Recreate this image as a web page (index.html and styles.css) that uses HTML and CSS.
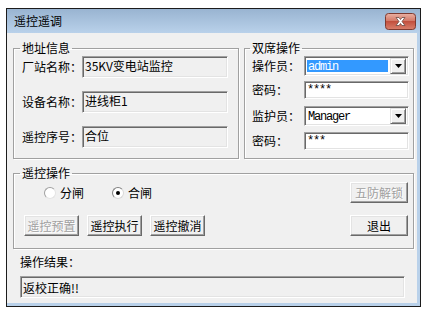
FILE: index.html
```html
<!DOCTYPE html>
<html lang="zh-CN">
<head>
  <meta charset="UTF-8">
  <title>遥控遥调</title>
  <link rel="stylesheet" href="styles.css">
</head>
<body>

<div class="window">
  <div class="titlebar">
    <span class="title">遥控遥调</span>
    <span class="close-btn">
      <svg width="31" height="17" viewBox="0 0 31 17">
        <defs>
          <linearGradient id="closeGrad" x1="0" y1="0" x2="0" y2="1">
            <stop offset="0" stop-color="#eab1a4"/>
            <stop offset="0.45" stop-color="#d47a68"/>
            <stop offset="0.5" stop-color="#c2503e"/>
            <stop offset="1" stop-color="#d9806c"/>
          </linearGradient>
        </defs>
        <rect x="0.5" y="0.5" width="30" height="16" rx="3" fill="url(#closeGrad)" stroke="#7d3a30"/>
        <path d="M11 4.5h3l1.5 2 1.5-2h3l-3 4 3 4h-3l-1.5-2-1.5 2h-3l3-4z" fill="#fff" stroke="#6b4a44" stroke-width="0.8" stroke-linejoin="round"/>
      </svg>
    </span>
  </div>

  <div class="client">
    <div class="top-row">
      <fieldset class="group group-addr">
        <legend>地址信息</legend>
        <div class="field"><label>厂站名称：</label><div class="edit">35KV变电站监控</div></div>
        <div class="field"><label>设备名称：</label><div class="edit">进线柜1</div></div>
        <div class="field"><label>遥控序号：</label><div class="edit">合位</div></div>
      </fieldset>

      <fieldset class="group group-dual">
        <legend>双席操作</legend>
        <div class="dual-row combo-row">
          <label>操作员：</label>
          <div class="combo">
            <span class="combo-value selected">admin</span>
            <span class="drop-btn"><svg width="7" height="4" viewBox="0 0 7 4"><path d="M0 0h7L3.5 4z" fill="#000"/></svg></span>
          </div>
        </div>
        <div class="dual-row pass-row first-pass">
          <label>密码：</label>
          <div class="pass">****</div>
        </div>
        <div class="dual-row combo-row second-combo">
          <label>监护员：</label>
          <div class="combo">
            <span class="combo-value">Manager</span>
            <span class="drop-btn"><svg width="7" height="4" viewBox="0 0 7 4"><path d="M0 0h7L3.5 4z" fill="#000"/></svg></span>
          </div>
        </div>
        <div class="dual-row pass-row second-pass">
          <label>密码：</label>
          <div class="pass">***</div>
        </div>
      </fieldset>
    </div>

    <fieldset class="group group-op">
      <legend>遥控操作</legend>
      <div class="op-row radio-row">
        <span class="radio-item"><span class="radio"></span>分闸</span>
        <span class="radio-item"><span class="radio checked"></span>合闸</span>
        <button class="btn" disabled>五防解锁</button>
      </div>
      <div class="op-row button-row">
        <button class="btn" disabled>遥控预置</button>
        <button class="btn">遥控执行</button>
        <button class="btn">遥控撤消</button>
        <button class="btn btn-exit">退出</button>
      </div>
    </fieldset>

    <div class="result-label">操作结果：</div>
    <div class="edit result">返校正确!!</div>
  </div>
</div>

</body>
</html>
```

FILE: styles.css
```css
* {
  box-sizing: border-box;
}

body {
  margin: 0;
  background: #ffffff;
  font-family: "Noto Sans CJK SC", "Liberation Sans", sans-serif;
  font-size: 12px;
  color: #000;
}

.window {
  margin: 8px 0 0 6px;
  width: 415px;
  height: 299px;
  border: 1px solid #1c1c1c;
  background: #b9d1ea;
  display: flex;
  flex-direction: column;
}

.titlebar {
  height: 24px;
  flex: none;
  display: flex;
  justify-content: space-between;
  padding: 0 4px 0 7px;
  background: linear-gradient(#99b4d1, #b9d1ea);
}

.title {
  line-height: 24px;
}

.close-btn {
  margin-top: 4px;
  width: 31px;
  height: 17px;
  display: block;
}

.close-btn svg {
  display: block;
}

.client {
  flex: 1;
  margin: 0 3px 3px 0;
  background: #f0f0f0;
  padding: 8px 0 0 6px;
}

/* group boxes */
.group {
  margin: 0;
  min-width: 0;
  border: 1px solid #a0a0a0;
  box-shadow: 1px 1px 0 #ffffff, inset 1px 1px 0 #ffffff;
}

.group legend {
  padding: 0 2px;
  margin-left: -2px;
  line-height: 14px;
}

.top-row {
  display: flex;
  gap: 5px;
}

.group-addr {
  width: 226px;
  padding: 1px 10px 10px 8px;
  display: grid;
  row-gap: 13px;
}

.group-dual {
  width: 170px;
  padding: 1px 4px 8px 7px;
}

.field {
  display: grid;
  grid-template-columns: 60px 146px;
  align-items: center;
}

.field label,
.dual-row label {
  line-height: 14px;
  white-space: nowrap;
}

/* sunken edit boxes */
.edit,
.pass,
.combo {
  border: 1px solid;
  border-color: #a0a0a0 #ffffff #ffffff #a0a0a0;
  box-shadow: inset 1px 1px 0 #696969, inset -1px -1px 0 #e3e3e3;
}

.edit {
  height: 22px;
  padding: 2px 2px 0;
  line-height: 14px;
  background: #f0f0f0;
  white-space: nowrap;
}

.dual-row {
  display: grid;
  grid-template-columns: 52px 105px;
  align-items: center;
}

.first-pass {
  margin-top: 5px;
}

.second-combo {
  margin-top: 7px;
}

.second-pass {
  margin-top: 6px;
}

.combo {
  height: 20px;
  background: #ffffff;
  display: flex;
  padding: 2px;
}

.combo-value {
  flex: 1;
  margin: 1px 2px 1px 0;
  padding-left: 1px;
  font-family: "Liberation Mono", monospace;
  font-size: 12px;
  letter-spacing: -1.2px;
  line-height: 14px;
}

.combo-value.selected {
  background: #3399ff;
  color: #ffffff;
}

.drop-btn {
  width: 16px;
  height: 16px;
  margin: -1px 0 0 0;
  background: #f0f0f0;
  border: 1px solid;
  border-color: #e3e3e3 #696969 #696969 #e3e3e3;
  box-shadow: inset 1px 1px 0 #ffffff, inset -1px -1px 0 #a0a0a0;
  display: flex;
  align-items: center;
  justify-content: center;
}

.drop-btn svg {
  display: block;
}

.pass {
  height: 18px;
  background: #ffffff;
  padding: 1px 2px 0;
  font-family: "Liberation Mono", monospace;
  font-size: 12px;
  letter-spacing: -1.2px;
  line-height: 14px;
}

/* remote control operation */
.group-op {
  margin-top: 7px;
  width: 401px;
  padding: 2px 5px 12px 8px;
}

.op-row {
  display: flex;
  align-items: center;
  height: 21px;
}

.radio-row {
  padding-left: 22px;
}

.button-row {
  margin-top: 12px;
  padding-left: 2px;
  gap: 8px;
}

.radio-item {
  display: flex;
  align-items: center;
  gap: 4px;
  width: 68px;
  line-height: 14px;
}

.radio {
  width: 12px;
  height: 12px;
  border-radius: 50%;
  background: #ffffff;
  border: 1px solid;
  border-color: #a0a0a0 #e3e3e3 #e3e3e3 #a0a0a0;
  display: flex;
  align-items: center;
  justify-content: center;
}

.radio.checked {
  border-color: #808080 #d8d8d8 #d8d8d8 #808080;
}

.radio.checked::after {
  content: "";
  width: 4px;
  height: 4px;
  border-radius: 50%;
  background: #000;
}

.btn {
  width: 55px;
  height: 21px;
  padding: 0;
  font: inherit;
  line-height: 14px;
  color: #000;
  background: #f0f0f0;
  border: 1px solid;
  border-color: #ffffff #696969 #696969 #ffffff;
  box-shadow: inset -1px -1px 0 #a0a0a0, inset 1px 1px 0 #e3e3e3;
}

.btn:disabled {
  color: #a0a0a0;
  text-shadow: 1px 1px 0 #ffffff;
}

.radio-row .btn,
.btn-exit {
  width: 58px;
  margin-left: auto;
}

.result-label {
  margin: 6px 0 0 7px;
  line-height: 14px;
}

.result {
  margin: 7px 0 0 7px;
  width: 385px;
  padding-top: 4px;
}
```
